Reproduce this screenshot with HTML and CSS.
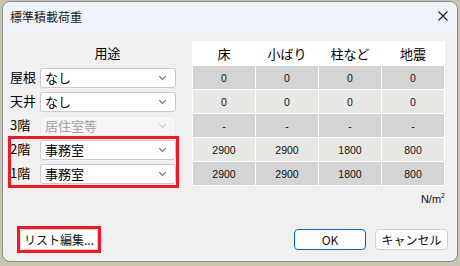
FILE: index.html
```html
<!DOCTYPE html>
<html lang="ja">
<head>
  <meta charset="UTF-8">
  <title>標準積載荷重</title>
  <link rel="stylesheet" href="styles.css">
</head>
<body>
  <div class="window">
    <div class="titlebar">
      <span class="title">標準積載荷重</span>
      <span class="close">
        <svg width="10" height="10" viewBox="0 0 10 10"><path d="M0.5 0.5 L9.5 9.5 M9.5 0.5 L0.5 9.5" stroke="#1a1a1a" stroke-width="1.1" fill="none"/></svg>
      </span>
    </div>

    <div class="main">
      <div class="usage">
        <div class="usage-head">用途</div>
        <div class="row">
          <span class="label">屋根</span>
          <div class="combo"><span>なし</span><i class="chev"></i></div>
        </div>
        <div class="row">
          <span class="label">天井</span>
          <div class="combo"><span>なし</span><i class="chev"></i></div>
        </div>
        <div class="row">
          <span class="label">3階</span>
          <div class="combo disabled"><span>居住室等</span><i class="chev"></i></div>
        </div>
        <div class="marked">
          <div class="row">
            <span class="label">2階</span>
            <div class="combo"><span>事務室</span><i class="chev"></i></div>
          </div>
          <div class="row">
            <span class="label">1階</span>
            <div class="combo"><span>事務室</span><i class="chev"></i></div>
          </div>
        </div>
      </div>

      <table class="loads">
        <thead>
          <tr><th>床</th><th>小ばり</th><th>柱など</th><th>地震</th></tr>
        </thead>
        <tbody>
          <tr class="dark"><td>0</td><td>0</td><td>0</td><td>0</td></tr>
          <tr class="light"><td>0</td><td>0</td><td>0</td><td>0</td></tr>
          <tr class="dark"><td>-</td><td>-</td><td>-</td><td>-</td></tr>
          <tr class="light"><td>2900</td><td>2900</td><td>1800</td><td>800</td></tr>
          <tr class="dark"><td>2900</td><td>2900</td><td>1800</td><td>800</td></tr>
        </tbody>
      </table>
    </div>

    <div class="unit">N/m<sup>2</sup></div>

    <div class="buttons">
      <span class="marked-box"><button class="btn">リスト編集...</button></span>
      <span class="spacer"></span>
      <button class="btn primary">OK</button>
      <button class="btn">キャンセル</button>
    </div>
  </div>
</body>
</html>
```

FILE: styles.css
```css
html, body {
  margin: 0;
  padding: 0;
  background: #c9c5ae;
}

body {
  font-family: "Noto Sans CJK JP", "Liberation Sans", sans-serif;
  font-size: 13px;
  color: #000;
  width: 460px;
  height: 266px;
  overflow: hidden;
}

.window {
  margin: 1px 0 0 2px;
  width: 454px;
  height: 259px;
  border: 1px solid #8a8a8a;
  border-radius: 8px;
  background: #f0f0f0;
  overflow: hidden;
}

.titlebar {
  height: 29px;
  background: #eef4f9;
  display: flex;
  align-items: center;
  justify-content: space-between;
  padding: 0 9px 0 7px;
}

.title {
  font-size: 12px;
  color: #1a1a1a;
}

.close {
  display: flex;
  margin-top: -2px;
}

.main {
  display: flex;
  padding-top: 10px;
}

.usage {
  width: 182px;
  padding-left: 7px;
}

.usage-head {
  height: 25px;
  padding-left: 30px;
  width: 135px;
  text-align: center;
  line-height: 24px;
  font-size: 13px;
}

.row {
  display: flex;
  height: 24px;
  width: 167px;
}

.label {
  width: 30px;
  line-height: 22px;
  font-size: 13px;
}

.combo {
  margin-top: 2px;
  width: 130px;
  height: 18px;
  border: 1px solid #cbcbcb;
  border-radius: 3px;
  background: #fff;
  display: flex;
  align-items: center;
  justify-content: space-between;
  padding: 0 0 0 4px;
}

.combo span {
  font-size: 13px;
  line-height: 18px;
}

.chev {
  width: 4px;
  height: 4px;
  border-right: 1px solid #666;
  border-bottom: 1px solid #666;
  transform: rotate(45deg);
  margin: -3px 10px 0 0;
}

.combo.disabled {
  background: #f6f6f6;
  border-color: #ececec;
  color: #a0a0a0;
}

.combo.disabled .chev {
  border-color: #c4c4c4;
}

.marked {
  outline: 3px solid #ed1c24;
  outline-offset: -1px;
  width: 167px;
}

.loads {
  border-collapse: separate;
  border-spacing: 1px;
  background: #fff;
  height: fit-content;
}

.loads th {
  width: 62px;
  height: 23px;
  padding: 0;
  font-weight: normal;
  font-size: 13px;
  background: #fff;
}

.loads td {
  height: 23px;
  padding: 0;
  text-align: center;
  font-family: "Liberation Sans", sans-serif;
  font-size: 10.5px;
  color: #111;
}

.dark td {
  background: #d4d4d4;
}

.light td {
  background: #e7e8e3;
}

.unit {
  text-align: right;
  padding-right: 12px;
  margin-top: 6px;
  height: 16px;
  font-family: "Liberation Sans", sans-serif;
  font-size: 11px;
  color: #111;
}

.unit sup {
  font-size: 7px;
}

.buttons {
  display: flex;
  align-items: center;
  padding: 0 9px 0 14px;
  margin-top: 18px;
}

.spacer {
  flex: 1;
}

.marked-box {
  display: flex;
  border: 3px solid #ed1c24;
}

.btn {
  font-family: "Noto Sans CJK JP", "Liberation Sans", sans-serif;
  font-size: 12px;
  height: 21px;
  padding: 0;
  width: 73px;
  background: #fdfdfd;
  border: 1px solid #d0d0d0;
  border-radius: 4px;
  color: #111;
  line-height: 19px;
}

.marked-box .btn {
  width: 78px;
  margin: 0;
}

.btn.primary {
  border-color: #0067c0;
  margin-right: 9px;
  width: 72px;
}
```
